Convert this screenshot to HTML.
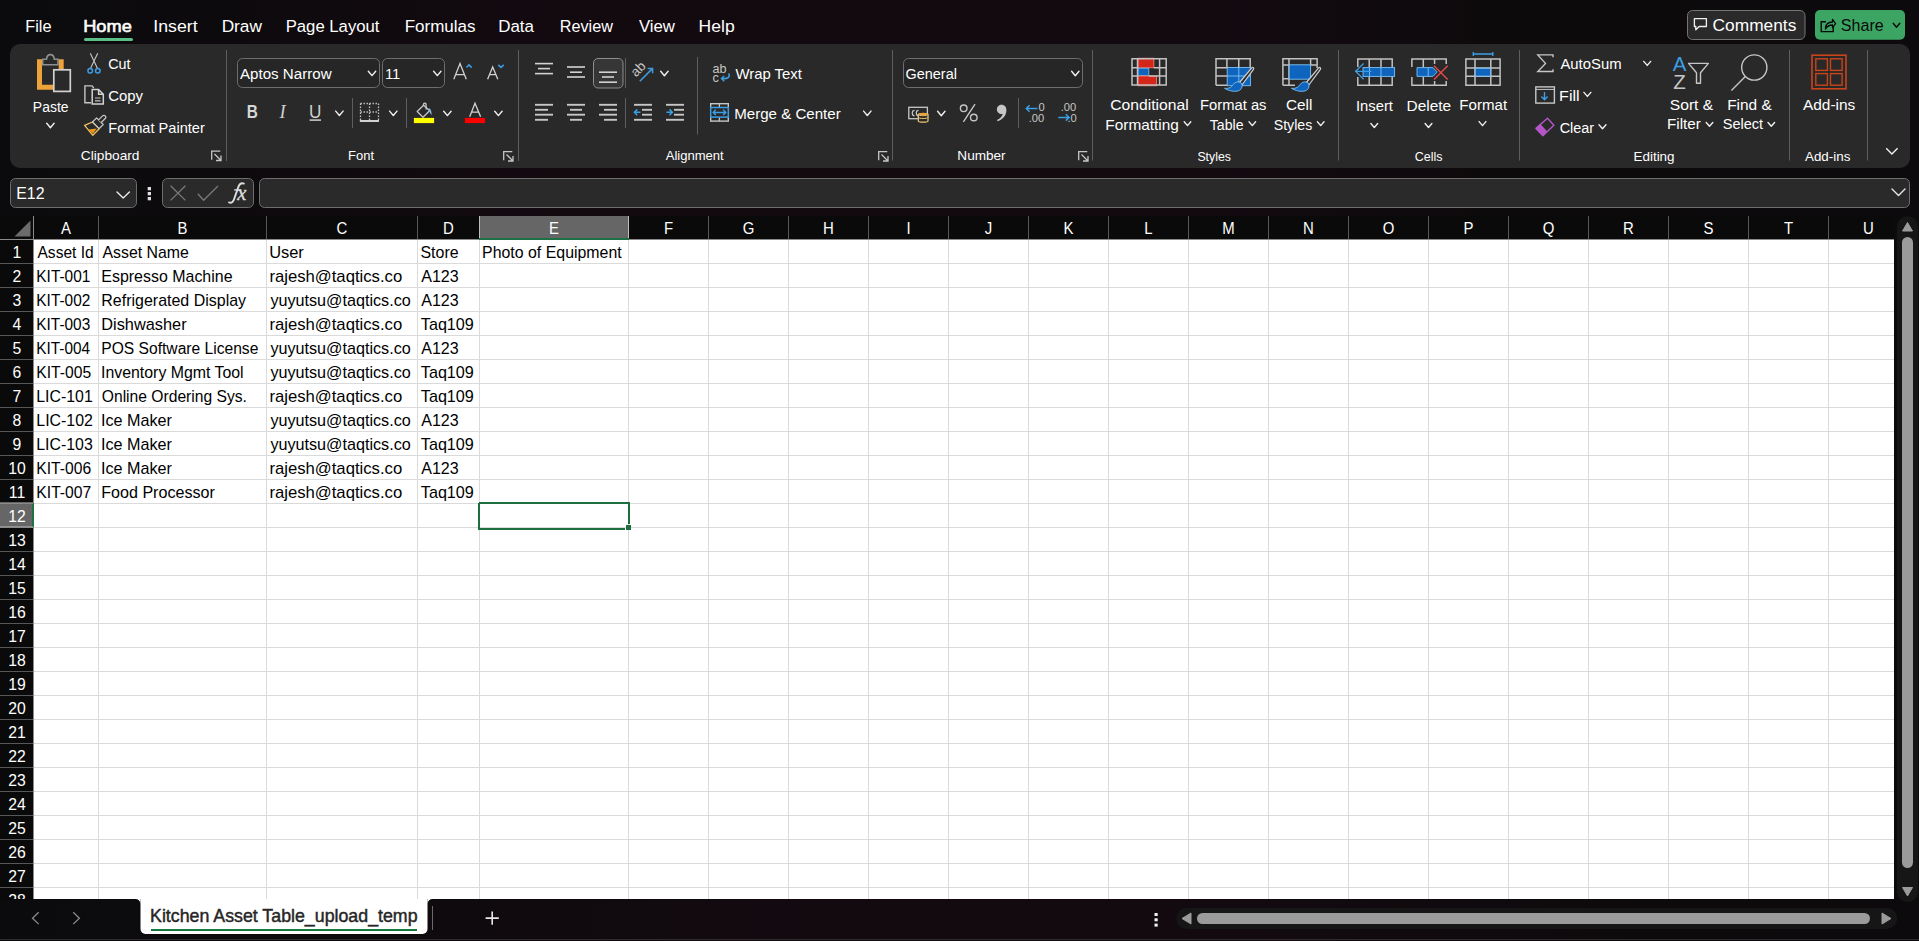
<!DOCTYPE html>
<html><head><meta charset="utf-8"><title>Excel</title>
<style>html,body{margin:0;padding:0;background:#0c0a0c;overflow:hidden;width:1919px;height:941px}svg{display:block}</style></head>
<body><svg width="1919" height="941" viewBox="0 0 1919 941" font-family="Liberation Sans, sans-serif">
<defs>
<linearGradient id="tbg" x1="0" y1="0" x2="1" y2="0">
<stop offset="0" stop-color="#0b0b0d"/><stop offset="0.12" stop-color="#0d0a0d"/><stop offset="0.3" stop-color="#130a10"/><stop offset="0.62" stop-color="#130a10"/><stop offset="0.78" stop-color="#0d0a0c"/><stop offset="1" stop-color="#0c0a0c"/>
</linearGradient>
<linearGradient id="bbg" x1="0" y1="0" x2="1" y2="0">
<stop offset="0" stop-color="#0b0b0d"/><stop offset="0.2" stop-color="#0e0a0d"/><stop offset="0.45" stop-color="#130a10"/><stop offset="0.65" stop-color="#120a0f"/><stop offset="0.85" stop-color="#0d0a0c"/><stop offset="1" stop-color="#0c0a0c"/>
</linearGradient>
</defs>
<rect x="0" y="0" width="1919" height="216" fill="url(#tbg)"/>
<rect x="10" y="44" width="1900" height="124" fill="#292929" rx="10"/>
<rect x="237.5" y="58.5" width="142" height="29" fill="#262626" rx="5" stroke="#6e6e6e" stroke-width="1"/>
<rect x="382.5" y="58.5" width="62" height="29" fill="#262626" rx="5" stroke="#6e6e6e" stroke-width="1"/>
<rect x="903.5" y="58.5" width="179" height="29" fill="#262626" rx="5" stroke="#6e6e6e" stroke-width="1"/>
<text transform="translate(25.21,32) scale(0.9391,1)" font-size="17.4" fill="#fff">File</text>
<text transform="translate(83.16,32) scale(1.0486,1)" font-size="17.4" fill="#fff" stroke="#fff" stroke-width="0.6">Home</text>
<text transform="translate(153.35,32) scale(1.0180,1)" font-size="17.4" fill="#fff">Insert</text>
<text transform="translate(221.63,32) scale(0.9936,1)" font-size="17.4" fill="#fff">Draw</text>
<text transform="translate(285.68,32) scale(0.9610,1)" font-size="17.4" fill="#fff">Page Layout</text>
<text transform="translate(404.65,32) scale(0.9787,1)" font-size="17.4" fill="#fff">Formulas</text>
<text transform="translate(498.16,32) scale(0.9753,1)" font-size="17.4" fill="#fff">Data</text>
<text transform="translate(559.72,32) scale(0.9327,1)" font-size="17.4" fill="#fff">Review</text>
<text transform="translate(638.88,32) scale(0.9632,1)" font-size="17.4" fill="#fff">View</text>
<text transform="translate(698.61,32) scale(1.0074,1)" font-size="17.4" fill="#fff">Help</text>
<rect x="84" y="38" width="49" height="3" fill="#5cbf87" rx="1.5"/>
<rect x="1687.5" y="10.5" width="117.5" height="29" fill="#2a2a2a" rx="5" stroke="#767676" stroke-width="1"/>
<text transform="translate(1712.60,30.5) scale(1.0701,1)" font-size="16.2" fill="#fff">Comments</text>
<rect x="1815" y="10" width="90" height="29.8" fill="#3ca564" rx="5"/>
<text transform="translate(1840.86,30.5) scale(0.9916,1)" font-size="16.2" fill="#0a0a0a">Share</text>
<text transform="translate(32.85,112) scale(0.9189,1)" font-size="15.2" fill="#fff">Paste</text>
<text transform="translate(108.30,68.7) scale(0.9399,1)" font-size="15.2" fill="#fff">Cut</text>
<text transform="translate(108.27,100.8) scale(0.9784,1)" font-size="15.2" fill="#fff">Copy</text>
<text transform="translate(108.20,132.5) scale(0.9624,1)" font-size="15.2" fill="#fff">Format Painter</text>
<text transform="translate(80.85,159.5) scale(1.0382,1)" font-size="13.2" fill="#fff">Clipboard</text>
<text transform="translate(348.01,160) scale(0.9852,1)" font-size="13.2" fill="#fff">Font</text>
<text transform="translate(665.75,159.5) scale(0.9893,1)" font-size="13.2" fill="#fff">Alignment</text>
<text transform="translate(957.37,160) scale(1.0295,1)" font-size="13.2" fill="#fff">Number</text>
<text transform="translate(1197.42,160.5) scale(0.9319,1)" font-size="13.2" fill="#fff">Styles</text>
<text transform="translate(1414.71,160.5) scale(0.9451,1)" font-size="13.2" fill="#fff">Cells</text>
<text transform="translate(1633.48,161.1) scale(1.0182,1)" font-size="13.2" fill="#fff">Editing</text>
<text transform="translate(1805.00,160.7) scale(1.0141,1)" font-size="13.2" fill="#fff">Add-ins</text>
<text transform="translate(240.00,78.6) scale(0.9954,1)" font-size="15.2" fill="#fff">Aptos Narrow</text>
<text transform="translate(384.90,78.6) scale(0.9786,1)" font-size="15.2" fill="#fff">11</text>
<text transform="translate(735.40,78.9) scale(0.9801,1)" font-size="15.2" fill="#fff">Wrap Text</text>
<text transform="translate(734.16,118.7) scale(0.9946,1)" font-size="15.2" fill="#fff">Merge &amp; Center</text>
<text transform="translate(905.49,78.9) scale(0.9508,1)" font-size="15.2" fill="#fff">General</text>
<text transform="translate(1110.23,109.8) scale(1.0316,1)" font-size="15.2" fill="#fff">Conditional</text>
<text transform="translate(1105.33,129.7) scale(1.0128,1)" font-size="15.2" fill="#fff">Formatting</text>
<text transform="translate(1200.09,109.8) scale(0.9711,1)" font-size="15.2" fill="#fff">Format as</text>
<text transform="translate(1209.77,129.7) scale(0.9296,1)" font-size="15.2" fill="#fff">Table</text>
<text transform="translate(1286.04,109.8) scale(1.0082,1)" font-size="15.2" fill="#fff">Cell</text>
<text transform="translate(1273.72,129.7) scale(0.9317,1)" font-size="15.2" fill="#fff">Styles</text>
<text transform="translate(1355.96,111.4) scale(0.9726,1)" font-size="15.2" fill="#fff">Insert</text>
<text transform="translate(1406.53,111.4) scale(1.0167,1)" font-size="15.2" fill="#fff">Delete</text>
<text transform="translate(1459.26,109.8) scale(0.9947,1)" font-size="15.2" fill="#fff">Format</text>
<text transform="translate(1560.40,69) scale(0.9789,1)" font-size="15.2" fill="#fff">AutoSum</text>
<text transform="translate(1559.08,100.5) scale(1.0569,1)" font-size="15.2" fill="#fff">Fill</text>
<text transform="translate(1559.69,132.6) scale(0.9498,1)" font-size="15.2" fill="#fff">Clear</text>
<text transform="translate(1669.76,110) scale(1.0296,1)" font-size="15.2" fill="#fff">Sort &amp;</text>
<text transform="translate(1667.05,129.3) scale(1.0008,1)" font-size="15.2" fill="#fff">Filter</text>
<text transform="translate(1727.13,110) scale(1.0165,1)" font-size="15.2" fill="#fff">Find &amp;</text>
<text transform="translate(1722.70,129.3) scale(0.9566,1)" font-size="15.2" fill="#fff">Select</text>
<text transform="translate(1803.00,110) scale(1.0157,1)" font-size="15.2" fill="#fff">Add-ins</text>
<line x1="226.5" y1="50" x2="226.5" y2="161" stroke="#5e5e5e" stroke-width="1"/>
<line x1="518.5" y1="50" x2="518.5" y2="161" stroke="#5e5e5e" stroke-width="1"/>
<line x1="697.5" y1="57" x2="697.5" y2="134.5" stroke="#5e5e5e" stroke-width="1"/>
<line x1="892.5" y1="50" x2="892.5" y2="160.5" stroke="#5e5e5e" stroke-width="1"/>
<line x1="1092.5" y1="50" x2="1092.5" y2="160.5" stroke="#5e5e5e" stroke-width="1"/>
<line x1="1338.5" y1="50" x2="1338.5" y2="160.5" stroke="#5e5e5e" stroke-width="1"/>
<line x1="1519.5" y1="50" x2="1519.5" y2="160.5" stroke="#5e5e5e" stroke-width="1"/>
<line x1="1789.5" y1="50" x2="1789.5" y2="160.5" stroke="#5e5e5e" stroke-width="1"/>
<line x1="1867.5" y1="50" x2="1867.5" y2="160.5" stroke="#5e5e5e" stroke-width="1"/>
<line x1="352.5" y1="98" x2="352.5" y2="128" stroke="#5e5e5e" stroke-width="1"/>
<line x1="406.5" y1="98" x2="406.5" y2="128" stroke="#5e5e5e" stroke-width="1"/>
<line x1="625.5" y1="58" x2="625.5" y2="88" stroke="#5e5e5e" stroke-width="1"/>
<line x1="625.5" y1="98" x2="625.5" y2="128" stroke="#5e5e5e" stroke-width="1"/>
<line x1="1018.5" y1="98" x2="1018.5" y2="128" stroke="#5e5e5e" stroke-width="1"/>
<rect x="10.5" y="178.5" width="126" height="29" fill="#2a2a2a" rx="5" stroke="#6e6e6e" stroke-width="1"/>
<rect x="162.5" y="178.5" width="91" height="29" fill="#2a2a2a" rx="5" stroke="#6e6e6e" stroke-width="1"/>
<rect x="259.5" y="178.5" width="1650" height="29" fill="#2a2a2a" rx="5" stroke="#6e6e6e" stroke-width="1"/>
<text transform="translate(16.20,198.6) scale(0.9459,1)" font-size="16.8" fill="#fff">E12</text>
<path d="M39.5 59.3V87.3H61.2V59.3" stroke="#eda23a" stroke-width="5" fill="none"/>
<path d="M42.7 64.7V59.2H46.5C46.8 56.2 48.5 54.6 50.4 54.6C52.3 54.6 54 56.2 54.3 59.2H58V64.7Z" stroke="#8f8f8f" stroke-width="1.6" fill="#292929"/>
<rect x="53.8" y="69.8" width="16.5" height="21.6" stroke="#d2d2d2" stroke-width="1.7" fill="#292929"/>
<path d="M46.70 123.30L50.40 127.70L54.10 123.30" stroke="#f0f0f0" stroke-width="1.4" fill="none" stroke-linejoin="round" stroke-linecap="round"/>
<path d="M90.3 53.3L97.4 68.3M97.7 53.3L90.6 68.3" stroke="#c6c6c6" stroke-width="1.1" fill="none"/>
<circle cx="90.2" cy="70.8" r="2.3" stroke="#3c9ee3" stroke-width="1.5" fill="none"/><circle cx="97.8" cy="70.8" r="2.3" stroke="#3c9ee3" stroke-width="1.5" fill="none"/>
<path d="M91 102.7H84.9V85.9H92L93.8 88" stroke="#c6c6c6" stroke-width="1.4" fill="none"/>
<path d="M92.2 89.5H98.6L103.3 94.2V104H92.2Z M98.6 89.5V94.2H103.3" stroke="#d2d2d2" stroke-width="1.5" fill="none" stroke-linejoin="miter"/>
<path d="M95 98H100.5M95 100.9H100.5" stroke="#c6c6c6" stroke-width="1.1"/>
<path d="M84.6 125.3L92.5 122L99.2 128.7L92.8 135.3Z" fill="#292929" stroke="#f3c463" stroke-width="1.3" stroke-linejoin="round"/>
<path d="M88.2 129.6L96.8 128.6L92.9 133.7Z" fill="#e8961c"/>
<path d="M92.5 122L96.6 117.9L103.2 124.5L99.2 128.6Z" fill="#292929" stroke="#c6c6c6" stroke-width="1.3" stroke-linejoin="round"/>
<path d="M98.6 119.9L102.6 115.9C103.4 115.1 104.4 115.1 105.2 115.9C106 116.7 106 117.7 105.2 118.5L101.2 122.5" fill="#292929" stroke="#c6c6c6" stroke-width="1.3" stroke-linejoin="round"/>
<path d="M211.7 159.8V151.2H220.3" stroke="#c6c6c6" stroke-width="1.3" fill="none"/><path d="M214.5 154.0L221 160.5M216 160.5H221V155.5" stroke="#c6c6c6" stroke-width="1.3" fill="none"/>
<path d="M368.30 71.20L372.00 75.60L375.70 71.20" stroke="#f0f0f0" stroke-width="1.4" fill="none" stroke-linejoin="round" stroke-linecap="round"/>
<path d="M433.60 71.20L437.30 75.60L441.00 71.20" stroke="#f0f0f0" stroke-width="1.4" fill="none" stroke-linejoin="round" stroke-linecap="round"/>
<path d="M453.8 79.3L460 63.6L466.3 79.3M455.9 74.6H464.2" stroke="#d2d2d2" stroke-width="1.3" fill="none"/>
<path d="M466.4 67.6L469 64.9L471.7 67.6" stroke="#3c9ee3" stroke-width="1.5" fill="none"/>
<path d="M487.6 79.3L492.7 66.9L497.8 79.3M489.4 74.7H496" stroke="#d2d2d2" stroke-width="1.3" fill="none"/>
<path d="M498.2 64.9L501 67.4L503.7 64.9" stroke="#3c9ee3" stroke-width="1.5" fill="none"/>
<text transform="translate(246.68,117.9) scale(0.8174,1)" font-size="18.8" fill="#d6d6d6" font-weight="700">B</text>
<text x="279.5" y="117.9" font-family="Liberation Serif" font-style="italic" font-size="18.5" fill="#d0d0d0">I</text>
<text transform="translate(309.10,118) scale(0.9446,1)" font-size="18.2" fill="#d0d0d0">U</text>
<rect x="309.6" y="119.3" width="11.4" height="1.6" fill="#c6c6c6"/>
<path d="M335.70 111.10L339.40 115.50L343.10 111.10" stroke="#f0f0f0" stroke-width="1.4" fill="none" stroke-linejoin="round" stroke-linecap="round"/>
<path d="M360.5 103.5H378.5M360.5 112H378.5M360.5 103.5V120.5M369.5 103.5V120.5M378.5 103.5V120.5" stroke="#c6c6c6" stroke-width="1.3" stroke-dasharray="1.4 1.6" fill="none"/>
<rect x="359.8" y="120" width="19.2" height="2" fill="#d2d2d2"/>
<path d="M389.60 111.10L393.30 115.50L397.00 111.10" stroke="#f0f0f0" stroke-width="1.4" fill="none" stroke-linejoin="round" stroke-linecap="round"/>
<path d="M417.2 111.5L423.6 105.2L429.6 110.7L423 117.2Z" stroke="#c6c6c6" stroke-width="1.3" fill="none" stroke-linejoin="round"/>
<path d="M423.4 105.4V104.5C423.4 102.8 426.1 102.8 426.1 104.5V109.5" stroke="#c6c6c6" stroke-width="1.3" fill="none"/>
<path d="M428.6 108C430.5 108.5 431.6 110.2 431.6 115.3C430 113.5 429 111 428.6 108Z" fill="#7db9e9"/>
<rect x="413.9" y="117.9" width="20.2" height="5.2" fill="#ffff00"/>
<path d="M443.70 111.20L447.40 115.60L451.10 111.20" stroke="#f0f0f0" stroke-width="1.4" fill="none" stroke-linejoin="round" stroke-linecap="round"/>
<path d="M469.7 116.8L475 103.2L480.6 116.8M471.5 112.2H478.8" stroke="#d2d2d2" stroke-width="1.3" fill="none"/>
<rect x="464.9" y="117.9" width="20.2" height="5.2" fill="#ff0000"/>
<path d="M494.70 111.20L498.40 115.60L502.10 111.20" stroke="#f0f0f0" stroke-width="1.4" fill="none" stroke-linejoin="round" stroke-linecap="round"/>
<path d="M503.7 160.3V151.7H512.3" stroke="#c6c6c6" stroke-width="1.3" fill="none"/><path d="M506.5 154.5L513 161M508 161H513V156" stroke="#c6c6c6" stroke-width="1.3" fill="none"/>
<rect x="593.5" y="58.5" width="29.5" height="29.5" rx="4.5" fill="#363636" stroke="#8e8e8e" stroke-width="1"/>
<path d="M535 63.6H553" stroke="#d2d2d2" stroke-width="1.6"/>
<path d="M538 68.6H550" stroke="#d2d2d2" stroke-width="1.6"/>
<path d="M535 73.6H553" stroke="#d2d2d2" stroke-width="1.6"/>
<path d="M567 67H585" stroke="#d2d2d2" stroke-width="1.6"/>
<path d="M570 72.2H582" stroke="#d2d2d2" stroke-width="1.6"/>
<path d="M567 77H585" stroke="#d2d2d2" stroke-width="1.6"/>
<path d="M599 72.2H617" stroke="#d2d2d2" stroke-width="1.6"/>
<path d="M602 77H614" stroke="#d2d2d2" stroke-width="1.6"/>
<path d="M599 82.2H617" stroke="#d2d2d2" stroke-width="1.6"/>
<path d="M535 104.8H553" stroke="#c6c6c6" stroke-width="1.9"/>
<path d="M567 104.8H585" stroke="#c6c6c6" stroke-width="1.9"/>
<path d="M599 104.8H617" stroke="#c6c6c6" stroke-width="1.9"/>
<path d="M535 109.8H548" stroke="#c6c6c6" stroke-width="1.9"/>
<path d="M570 109.8H582" stroke="#c6c6c6" stroke-width="1.9"/>
<path d="M604 109.8H617" stroke="#c6c6c6" stroke-width="1.9"/>
<path d="M535 114.7H553" stroke="#c6c6c6" stroke-width="1.9"/>
<path d="M567 114.7H585" stroke="#c6c6c6" stroke-width="1.9"/>
<path d="M599 114.7H617" stroke="#c6c6c6" stroke-width="1.9"/>
<path d="M535 119.8H548" stroke="#c6c6c6" stroke-width="1.9"/>
<path d="M570 119.8H582" stroke="#c6c6c6" stroke-width="1.9"/>
<path d="M604 119.8H617" stroke="#c6c6c6" stroke-width="1.9"/>
<path d="M634 104.8H652" stroke="#c6c6c6" stroke-width="1.9"/>
<path d="M642 109.8H652" stroke="#c6c6c6" stroke-width="1.9"/>
<path d="M642 114.7H652" stroke="#c6c6c6" stroke-width="1.9"/>
<path d="M634 119.8H652" stroke="#c6c6c6" stroke-width="1.9"/>
<path d="M640.5 112.3H634.6M637.3 109.4L634.4 112.3L637.3 115.2" stroke="#3c9ee3" stroke-width="1.5" fill="none"/>
<path d="M666 104.8H684" stroke="#c6c6c6" stroke-width="1.9"/>
<path d="M674 109.8H684" stroke="#c6c6c6" stroke-width="1.9"/>
<path d="M674 114.7H684" stroke="#c6c6c6" stroke-width="1.9"/>
<path d="M666 119.8H684" stroke="#c6c6c6" stroke-width="1.9"/>
<path d="M666.4 112.3H672.4M669.5 109.4L672.4 112.3L669.5 115.2" stroke="#3c9ee3" stroke-width="1.5" fill="none"/>
<text transform="translate(636,77.6) rotate(-45)" font-size="13.5" fill="#c6c6c6">ab</text>
<path d="M639.8 81.2L652.6 68.4M647.6 68.4H652.6V73.3" stroke="#3c9ee3" stroke-width="1.5" fill="none"/>
<path d="M660.70 71.30L664.40 75.70L668.10 71.30" stroke="#f0f0f0" stroke-width="1.4" fill="none" stroke-linejoin="round" stroke-linecap="round"/>
<text x="712.4" y="72.6" font-size="12.6" fill="#c6c6c6">ab</text>
<text x="712.4" y="81.8" font-size="12.6" fill="#c6c6c6">c</text>
<path d="M728.6 73.5C730.5 76.5 728.5 79 722 78.6M724.3 76L721.5 78.6L724.3 81.3" stroke="#3c9ee3" stroke-width="1.5" fill="none"/>
<rect x="710.7" y="103.7" width="17.6" height="17.4" stroke="#c6c6c6" stroke-width="1.4" fill="none"/>
<path d="M719.4 103.7V107M719.4 117.5V121" stroke="#c6c6c6" stroke-width="1.3"/>
<rect x="710.7" y="107.5" width="17.6" height="9.6" stroke="#3c9ee3" stroke-width="1.5" fill="#292929"/>
<path d="M713.3 112.4H725.7M715.8 109.8L713.2 112.4L715.8 115M723.2 109.8L725.8 112.4L723.2 115" stroke="#3c9ee3" stroke-width="1.5" fill="none"/>
<path d="M863.60 111.10L867.30 115.50L871.00 111.10" stroke="#f0f0f0" stroke-width="1.4" fill="none" stroke-linejoin="round" stroke-linecap="round"/>
<path d="M878.7 160.3V151.7H887.3" stroke="#c6c6c6" stroke-width="1.3" fill="none"/><path d="M881.5 154.5L888 161M883 161H888V156" stroke="#c6c6c6" stroke-width="1.3" fill="none"/>
<path d="M1071.60 71.30L1075.30 75.70L1079.00 71.30" stroke="#f0f0f0" stroke-width="1.4" fill="none" stroke-linejoin="round" stroke-linecap="round"/>
<rect x="908.8" y="107.3" width="18.6" height="11.4" stroke="#c6c6c6" stroke-width="1.3" fill="none"/>
<path d="M914.5 110.3C911.5 110.3 911.5 115.8 914.5 115.8M918.5 110.3C915.5 110.3 915.5 115.8 918.5 115.8" stroke="#c6c6c6" stroke-width="1.2" fill="none"/>
<path d="M918.3 114.5V121C918.3 122.6 928 122.6 928 121V114.5C928 112.8 918.3 112.8 918.3 114.5Z" fill="#292929" stroke="#f0c878" stroke-width="1.2"/>
<path d="M918.3 117.3C918.3 118.9 928 118.9 928 117.3M918.3 114.5C918.3 116.1 928 116.1 928 114.5" stroke="#f0c878" stroke-width="1" fill="none"/>
<ellipse cx="923.15" cy="114.2" rx="4" ry="1.1" fill="#f0a030"/>
<path d="M937.60 111.30L941.30 115.70L945.00 111.30" stroke="#f0f0f0" stroke-width="1.4" fill="none" stroke-linejoin="round" stroke-linecap="round"/>
<circle cx="963.7" cy="108.3" r="3.3" stroke="#c6c6c6" stroke-width="1.4" fill="none"/><circle cx="973.8" cy="117.5" r="3.3" stroke="#c6c6c6" stroke-width="1.4" fill="none"/><path d="M963.4 121.8L975 104.2" stroke="#c6c6c6" stroke-width="1.4"/>
<path d="M1001.6 104.8C1004.6 104.8 1006.4 107.2 1006.4 110.2C1006.4 115.3 1003 119.3 997.6 121.2L997 119.9C1000.4 118.2 1002.2 116 1002.7 113.9C1002.4 114 1002 114.1 1001.6 114.1C999 114.1 996.9 112.1 996.9 109.5C996.9 106.9 999 104.8 1001.6 104.8Z" fill="#c6c6c6"/>
<text x="1038.5" y="111.4" font-size="11.2" fill="#c6c6c6">0</text>
<text x="1028.7" y="122" font-size="11.2" fill="#c6c6c6">.00</text>
<path d="M1037.4 108.5H1026.4M1029.6 105.3L1026.3 108.5L1029.6 111.7" stroke="#3c9ee3" stroke-width="1.5" fill="none"/>
<text x="1060.7" y="111.4" font-size="11.2" fill="#c6c6c6">.00</text>
<text x="1067.4" y="122" font-size="11.2" fill="#c6c6c6">.0</text>
<path d="M1058.3 117.4H1069M1065.8 114.2L1069.1 117.4L1065.8 120.6" stroke="#3c9ee3" stroke-width="1.5" fill="none"/>
<path d="M1078.7 160.3V151.7H1087.3" stroke="#c6c6c6" stroke-width="1.3" fill="none"/><path d="M1081.5 154.5L1088 161M1083 161H1088V156" stroke="#c6c6c6" stroke-width="1.3" fill="none"/>
<rect x="1138" y="58.2" width="15.9" height="9.6" fill="#d4271a" stroke="#ff8080" stroke-width="0.8"/>
<rect x="1138" y="68.2" width="10.8" height="7.2" fill="#0f64bd" stroke="#7cc3f5" stroke-width="0.8"/>
<rect x="1138" y="76" width="18.5" height="9.8" fill="#d4271a" stroke="#ff8080" stroke-width="0.8"/>
<path d="M1132 58.8H1166.2V85H1132Z M1132 67.7H1138M1153.9 67.7H1166.2M1132 76.1H1138M1148.8 76.1H1166.2M1137.5 58.8V85M1159.6 58.8V85" stroke="#c2c2c2" stroke-width="1.5" fill="none"/>
<path d="M1184.20 121.80L1187.50 125.60L1190.80 121.80" stroke="#f0f0f0" stroke-width="1.4" fill="none" stroke-linejoin="round" stroke-linecap="round"/>
<rect x="1227.2" y="67.5" width="23.2" height="18.2" fill="#0f64bd" stroke="#7cc3f5" stroke-width="0.9"/>
<path d="M1227.2 76H1250.4M1238.8 67.5V85.7" stroke="#7cc3f5" stroke-width="0.9"/>
<path d="M1216 85.2V58.8H1250.2V67.4M1216 85.2H1227M1216 67.8H1227.2M1216 75.9H1227.2M1226.9 58.8V67.5M1238.75 58.8V67.5" stroke="#c2c2c2" stroke-width="1.5" fill="none"/>
<path d="M1239.5 82.5L1251.5 68.2C1253 66.5 1254.5 68 1253.3 69.6L1242.3 84.5Z" fill="#292929" stroke="#d0d0d0" stroke-width="1.2"/>
<path d="M1239 82C1242.5 82.6 1243 86.5 1240.8 89.3C1238.5 92 1231 92.3 1224.6 88.3C1229.8 88.8 1231.5 86.8 1233.2 84.5C1234.8 82.3 1236.8 81.7 1239 82Z" fill="#0f64bd" stroke="#7cc3f5" stroke-width="0.9"/>
<path d="M1249.00 121.80L1252.30 125.60L1255.60 121.80" stroke="#f0f0f0" stroke-width="1.4" fill="none" stroke-linejoin="round" stroke-linecap="round"/>
<path d="M1282.9 85.2V58.8H1317.1V68M1282.9 85.2H1295M1283 65H1289M1310.6 65H1317.1M1283 78.7H1289M1289 58.8V85.2M1310.6 58.8V65" stroke="#c2c2c2" stroke-width="1.5" fill="none"/>
<rect x="1289.2" y="64.8" width="21.4" height="14.4" fill="#0f64bd" stroke="#7cc3f5" stroke-width="0.9"/>
<path d="M1306.4 82.5L1318.4 68.2C1319.9 66.5 1321.4 68 1320.2 69.6L1309.2 84.5Z" fill="#292929" stroke="#d0d0d0" stroke-width="1.2"/>
<path d="M1305.9 82C1309.4 82.6 1309.9 86.5 1307.7 89.3C1305.4 92 1297.9 92.3 1291.5 88.3C1296.7 88.8 1298.4 86.8 1300.1 84.5C1301.7 82.3 1303.7 81.7 1305.9 82Z" fill="#0f64bd" stroke="#7cc3f5" stroke-width="0.9"/>
<path d="M1317.40 121.80L1320.70 125.60L1324.00 121.80" stroke="#f0f0f0" stroke-width="1.4" fill="none" stroke-linejoin="round" stroke-linecap="round"/>
<path d="M1357.8 67V58.9H1392.2V67M1357.8 77V85.2H1392.2V77M1369.2 58.9V67M1381 58.9V67M1369.2 77V85.2M1381 77V85.2" stroke="#c2c2c2" stroke-width="1.5" fill="none"/>
<rect x="1363" y="67.6" width="31.6" height="8.8" fill="#0f64bd" stroke="#7cc3f5" stroke-width="0.9"/>
<path d="M1369.5 67.6V76.4M1381 67.6V76.4" stroke="#7cc3f5" stroke-width="0.9"/>
<path d="M1371.5 71.3H1356M1363.6 63.5L1355.6 71.3L1363.6 79.2" stroke="#3c9ee3" stroke-width="1.3" fill="none"/>
<path d="M1370.90 123.50L1374.30 127.50L1377.70 123.50" stroke="#f0f0f0" stroke-width="1.4" fill="none" stroke-linejoin="round" stroke-linecap="round"/>
<path d="M1411.9 67V58.9H1446.2V64M1411.9 77V85.2H1446.2V81M1423.3 58.9V67M1434.6 58.9V64M1423.3 77V85.2M1434.6 81V85.2" stroke="#c2c2c2" stroke-width="1.5" fill="none"/>
<path d="M1417 67.6H1433L1437.2 72L1433 76.4H1417Z" fill="#0f64bd" stroke="#7cc3f5" stroke-width="0.9"/>
<path d="M1428.2 67.6V76.4" stroke="#7cc3f5" stroke-width="0.9"/>
<path d="M1434 65.7L1447.7 79.5M1447.7 65.7L1434 79.5" stroke="#e8494a" stroke-width="1.4"/>
<path d="M1425.10 123.50L1428.50 127.50L1431.90 123.50" stroke="#f0f0f0" stroke-width="1.4" fill="none" stroke-linejoin="round" stroke-linecap="round"/>
<path d="M1473.3 54H1492.8M1473.3 52V56M1492.8 52V56" stroke="#3c9ee3" stroke-width="1.4"/>
<path d="M1465.9 58.9H1500.1V85.2H1465.9Z M1465.9 68H1500.1M1465.9 76.3H1500.1M1475 58.9V85.2M1490.8 58.9V85.2" stroke="#c2c2c2" stroke-width="1.5" fill="none"/>
<rect x="1475.3" y="68.3" width="15.2" height="7.8" fill="#0f64bd" stroke="#7cc3f5" stroke-width="0.9"/>
<path d="M1479.10 121.60L1482.50 125.60L1485.90 121.60" stroke="#f0f0f0" stroke-width="1.4" fill="none" stroke-linejoin="round" stroke-linecap="round"/>
<path d="M1553 57.2V54.9H1537.8L1545.5 63.4L1537.8 71.5H1553V69.2" stroke="#c6c6c6" stroke-width="1.4" fill="none" stroke-linejoin="miter"/>
<path d="M1643.70 61.40L1647.20 65.40L1650.70 61.40" stroke="#f0f0f0" stroke-width="1.4" fill="none" stroke-linejoin="round" stroke-linecap="round"/>
<rect x="1535.8" y="86.9" width="18.6" height="16.2" stroke="#c6c6c6" stroke-width="1.4" fill="none"/>
<path d="M1535.8 89.4H1554.4" stroke="#c6c6c6" stroke-width="1"/>
<path d="M1544.5 92V99.6M1541.4 96.6L1544.5 99.8L1547.6 96.6" stroke="#3c9ee3" stroke-width="1.4" fill="none"/>
<path d="M1583.90 92.40L1587.40 96.40L1590.90 92.40" stroke="#f0f0f0" stroke-width="1.4" fill="none" stroke-linejoin="round" stroke-linecap="round"/>
<path d="M1535.9 128.4L1547.5 118.2L1553.9 125.3L1542.9 135.8Z" stroke="#b455c8" stroke-width="1.4" fill="none" stroke-linejoin="round"/>
<path d="M1535.9 128.4L1540.6 124.3L1547.3 131.6L1542.9 135.8Z" fill="#b455c8"/>
<path d="M1599.00 124.70L1602.50 128.70L1606.00 124.70" stroke="#f0f0f0" stroke-width="1.4" fill="none" stroke-linejoin="round" stroke-linecap="round"/>
<text x="1672.8" y="70.6" font-size="20.5" fill="#3c9ee3">A</text>
<text x="1673.2" y="88.6" font-size="20.5" fill="#c6c6c6">Z</text>
<path d="M1688.6 63.4H1708.4L1700.5 72.8V83.2H1696.5V72.8Z" stroke="#c6c6c6" stroke-width="1.4" fill="none" stroke-linejoin="round"/>
<path d="M1706.20 122.50L1709.50 126.30L1712.80 122.50" stroke="#f0f0f0" stroke-width="1.4" fill="none" stroke-linejoin="round" stroke-linecap="round"/>
<circle cx="1754.3" cy="67.5" r="12.6" stroke="#c6c6c6" stroke-width="1.4" fill="none"/>
<path d="M1745.3 76.5L1731.4 90.4" stroke="#c6c6c6" stroke-width="1.4"/>
<path d="M1768.00 122.50L1771.30 126.30L1774.60 122.50" stroke="#f0f0f0" stroke-width="1.4" fill="none" stroke-linejoin="round" stroke-linecap="round"/>
<rect x="1812" y="55.2" width="34" height="33.6" stroke="#c9441b" stroke-width="1.6" fill="none"/>
<rect x="1815.8" y="58.8" width="11.6" height="11.6" stroke="#c9441b" stroke-width="1.4" fill="none"/>
<rect x="1830.5" y="58.8" width="11.6" height="11.6" stroke="#c9441b" stroke-width="1.4" fill="none"/>
<rect x="1815.8" y="73.6" width="11.6" height="11.6" stroke="#c9441b" stroke-width="1.4" fill="none"/>
<rect x="1830.5" y="73.6" width="11.6" height="11.6" stroke="#c9441b" stroke-width="1.4" fill="none"/>
<path d="M1886.2 148.3L1891.9 154L1897.6 148.3" stroke="#f0f0f0" stroke-width="1.4" fill="none"/>
<path d="M1694.4 18.6H1706.4V26.5H1699.2L1695.8 29.8V26.5H1694.4Z" stroke="#f0f0f0" stroke-width="1.3" fill="none" stroke-linejoin="round"/>
<path d="M1826 21.8H1821.2V31.6H1833.2V27" stroke="#0a0a0a" stroke-width="1.4" fill="none"/>
<path d="M1825.5 29C1825.5 23.8 1828.5 22 1832.5 22V19.3L1835.6 23.6L1832.5 27.6V25C1829 25 1827 26.5 1825.5 29Z" stroke="#0a0a0a" stroke-width="1.3" fill="none" stroke-linejoin="round"/>
<path d="M1893.20 23.20L1896.50 27.20L1899.80 23.20" stroke="#0a0a0a" stroke-width="1.4" fill="none" stroke-linejoin="round" stroke-linecap="round"/>
<path d="M117.00 191.90L123.20 198.10L129.40 191.90" stroke="#e8e8e8" stroke-width="1.4" fill="none" stroke-linejoin="round" stroke-linecap="round"/>
<rect x="147.7" y="187" width="3.3" height="3.3" fill="#e0e0e0"/><rect x="147.7" y="192" width="3.3" height="3.3" fill="#e0e0e0"/><rect x="147.7" y="197" width="3.3" height="3.3" fill="#e0e0e0"/>
<path d="M170.6 185.8L185.4 200.4M185.4 185.8L170.6 200.4" stroke="#7a7a7a" stroke-width="1.3"/>
<path d="M197.8 193.8L203.6 200.2L218 186" stroke="#7a7a7a" stroke-width="1.3" fill="none"/>
<path d="M229 202.4C231.6 203.4 233.4 201.8 234.7 197.4L238.5 186.6C239.6 183.7 241.4 182.7 243.9 183.6" stroke="#dcdcdc" stroke-width="1.9" fill="none" stroke-linecap="round"/>
<path d="M234.2 189.9H241.4" stroke="#dcdcdc" stroke-width="1.4"/>
<text x="237.2" y="199.8" font-family="Liberation Serif" font-style="italic" font-size="20.5" fill="#dcdcdc" stroke="#dcdcdc" stroke-width="0.35">x</text>
<path d="M1892.00 189.10L1898.50 195.50L1905.00 189.10" stroke="#e8e8e8" stroke-width="1.4" fill="none" stroke-linejoin="round" stroke-linecap="round"/>
<rect x="0" y="216" width="1894" height="24" fill="#0a0a0a"/>
<rect x="1894" y="216" width="25" height="683" fill="#0b0b0b"/>
<rect x="34" y="240" width="1860" height="659" fill="#ffffff"/>
<rect x="0" y="240" width="33" height="659" fill="#0a0a0a"/>
<rect x="479" y="216" width="150" height="23" fill="#666666"/>
<rect x="0" y="503" width="33" height="24" fill="#666666"/>
<path d="M98.5 240V899 M266.5 240V899 M417.5 240V899 M479.5 240V899 M628.5 240V899 M708.5 240V899 M788.5 240V899 M868.5 240V899 M948.5 240V899 M1028.5 240V899 M1108.5 240V899 M1188.5 240V899 M1268.5 240V899 M1348.5 240V899 M1428.5 240V899 M1508.5 240V899 M1588.5 240V899 M1668.5 240V899 M1748.5 240V899 M1828.5 240V899 M34 263.5H1894 M34 287.5H1894 M34 311.5H1894 M34 335.5H1894 M34 359.5H1894 M34 383.5H1894 M34 407.5H1894 M34 431.5H1894 M34 455.5H1894 M34 479.5H1894 M34 503.5H1894 M34 527.5H1894 M34 551.5H1894 M34 575.5H1894 M34 599.5H1894 M34 623.5H1894 M34 647.5H1894 M34 671.5H1894 M34 695.5H1894 M34 719.5H1894 M34 743.5H1894 M34 767.5H1894 M34 791.5H1894 M34 815.5H1894 M34 839.5H1894 M34 863.5H1894 M34 887.5H1894" stroke="#dadada" stroke-width="1" fill="none"/>
<path d="M98.5 216V239 M266.5 216V239 M417.5 216V239 M479.5 216V239 M628.5 216V239 M708.5 216V239 M788.5 216V239 M868.5 216V239 M948.5 216V239 M1028.5 216V239 M1108.5 216V239 M1188.5 216V239 M1268.5 216V239 M1348.5 216V239 M1428.5 216V239 M1508.5 216V239 M1588.5 216V239 M1668.5 216V239 M1748.5 216V239 M1828.5 216V239 M0 263.5H33 M0 287.5H33 M0 311.5H33 M0 335.5H33 M0 359.5H33 M0 383.5H33 M0 407.5H33 M0 431.5H33 M0 455.5H33 M0 479.5H33 M0 503.5H33 M0 527.5H33 M0 551.5H33 M0 575.5H33 M0 599.5H33 M0 623.5H33 M0 647.5H33 M0 671.5H33 M0 695.5H33 M0 719.5H33 M0 743.5H33 M0 767.5H33 M0 791.5H33 M0 815.5H33 M0 839.5H33 M0 863.5H33 M0 887.5H33" stroke="#575757" stroke-width="1" fill="none"/>
<line x1="0" y1="239.5" x2="1894" y2="239.5" stroke="#8c8c8c" stroke-width="1"/>
<line x1="33.5" y1="216" x2="33.5" y2="899" stroke="#8c8c8c" stroke-width="1"/>
<line x1="33" y1="503" x2="33" y2="527" stroke="#1e7145" stroke-width="2"/>
<rect x="479" y="238" width="150" height="2" fill="#1e7145"/>
<line x1="479.5" y1="216" x2="479.5" y2="238" stroke="#bdbdbd" stroke-width="1"/>
<line x1="628.5" y1="216" x2="628.5" y2="238" stroke="#bdbdbd" stroke-width="1"/>
<rect x="0" y="502.5" width="33" height="1" fill="#bdbdbd"/>
<rect x="0" y="526.5" width="33" height="1" fill="#bdbdbd"/>
<path d="M14.5 236.5L30.5 220.5V236.5Z" fill="#6b6b6b"/>
<text transform="translate(66.0,233.8) scale(0.9,1)" font-size="16.6" fill="#fff" text-anchor="middle">A</text>
<text transform="translate(182.5,233.8) scale(0.9,1)" font-size="16.6" fill="#fff" text-anchor="middle">B</text>
<text transform="translate(342.0,233.8) scale(0.9,1)" font-size="16.6" fill="#fff" text-anchor="middle">C</text>
<text transform="translate(448.5,233.8) scale(0.9,1)" font-size="16.6" fill="#fff" text-anchor="middle">D</text>
<text transform="translate(554.0,233.8) scale(0.9,1)" font-size="16.6" fill="#fff" text-anchor="middle">E</text>
<text transform="translate(668.5,233.8) scale(0.9,1)" font-size="16.6" fill="#fff" text-anchor="middle">F</text>
<text transform="translate(748.5,233.8) scale(0.9,1)" font-size="16.6" fill="#fff" text-anchor="middle">G</text>
<text transform="translate(828.5,233.8) scale(0.9,1)" font-size="16.6" fill="#fff" text-anchor="middle">H</text>
<text transform="translate(908.5,233.8) scale(0.9,1)" font-size="16.6" fill="#fff" text-anchor="middle">I</text>
<text transform="translate(988.5,233.8) scale(0.9,1)" font-size="16.6" fill="#fff" text-anchor="middle">J</text>
<text transform="translate(1068.5,233.8) scale(0.9,1)" font-size="16.6" fill="#fff" text-anchor="middle">K</text>
<text transform="translate(1148.5,233.8) scale(0.9,1)" font-size="16.6" fill="#fff" text-anchor="middle">L</text>
<text transform="translate(1228.5,233.8) scale(0.9,1)" font-size="16.6" fill="#fff" text-anchor="middle">M</text>
<text transform="translate(1308.5,233.8) scale(0.9,1)" font-size="16.6" fill="#fff" text-anchor="middle">N</text>
<text transform="translate(1388.5,233.8) scale(0.9,1)" font-size="16.6" fill="#fff" text-anchor="middle">O</text>
<text transform="translate(1468.5,233.8) scale(0.9,1)" font-size="16.6" fill="#fff" text-anchor="middle">P</text>
<text transform="translate(1548.5,233.8) scale(0.9,1)" font-size="16.6" fill="#fff" text-anchor="middle">Q</text>
<text transform="translate(1628.5,233.8) scale(0.9,1)" font-size="16.6" fill="#fff" text-anchor="middle">R</text>
<text transform="translate(1708.5,233.8) scale(0.9,1)" font-size="16.6" fill="#fff" text-anchor="middle">S</text>
<text transform="translate(1788.5,233.8) scale(0.9,1)" font-size="16.6" fill="#fff" text-anchor="middle">T</text>
<text transform="translate(1868.5,233.8) scale(0.9,1)" font-size="16.6" fill="#fff" text-anchor="middle">U</text>
<text transform="translate(17,257.8) scale(0.95,1)" font-size="16.6" fill="#fff" text-anchor="middle">1</text>
<text transform="translate(17,281.8) scale(0.95,1)" font-size="16.6" fill="#fff" text-anchor="middle">2</text>
<text transform="translate(17,305.8) scale(0.95,1)" font-size="16.6" fill="#fff" text-anchor="middle">3</text>
<text transform="translate(17,329.8) scale(0.95,1)" font-size="16.6" fill="#fff" text-anchor="middle">4</text>
<text transform="translate(17,353.8) scale(0.95,1)" font-size="16.6" fill="#fff" text-anchor="middle">5</text>
<text transform="translate(17,377.8) scale(0.95,1)" font-size="16.6" fill="#fff" text-anchor="middle">6</text>
<text transform="translate(17,401.8) scale(0.95,1)" font-size="16.6" fill="#fff" text-anchor="middle">7</text>
<text transform="translate(17,425.8) scale(0.95,1)" font-size="16.6" fill="#fff" text-anchor="middle">8</text>
<text transform="translate(17,449.8) scale(0.95,1)" font-size="16.6" fill="#fff" text-anchor="middle">9</text>
<text transform="translate(17,473.8) scale(0.95,1)" font-size="16.6" fill="#fff" text-anchor="middle">10</text>
<text transform="translate(17,497.8) scale(0.95,1)" font-size="16.6" fill="#fff" text-anchor="middle">11</text>
<text transform="translate(17,521.8) scale(0.95,1)" font-size="16.6" fill="#fff" text-anchor="middle">12</text>
<text transform="translate(17,545.8) scale(0.95,1)" font-size="16.6" fill="#fff" text-anchor="middle">13</text>
<text transform="translate(17,569.8) scale(0.95,1)" font-size="16.6" fill="#fff" text-anchor="middle">14</text>
<text transform="translate(17,593.8) scale(0.95,1)" font-size="16.6" fill="#fff" text-anchor="middle">15</text>
<text transform="translate(17,617.8) scale(0.95,1)" font-size="16.6" fill="#fff" text-anchor="middle">16</text>
<text transform="translate(17,641.8) scale(0.95,1)" font-size="16.6" fill="#fff" text-anchor="middle">17</text>
<text transform="translate(17,665.8) scale(0.95,1)" font-size="16.6" fill="#fff" text-anchor="middle">18</text>
<text transform="translate(17,689.8) scale(0.95,1)" font-size="16.6" fill="#fff" text-anchor="middle">19</text>
<text transform="translate(17,713.8) scale(0.95,1)" font-size="16.6" fill="#fff" text-anchor="middle">20</text>
<text transform="translate(17,737.8) scale(0.95,1)" font-size="16.6" fill="#fff" text-anchor="middle">21</text>
<text transform="translate(17,761.8) scale(0.95,1)" font-size="16.6" fill="#fff" text-anchor="middle">22</text>
<text transform="translate(17,785.8) scale(0.95,1)" font-size="16.6" fill="#fff" text-anchor="middle">23</text>
<text transform="translate(17,809.8) scale(0.95,1)" font-size="16.6" fill="#fff" text-anchor="middle">24</text>
<text transform="translate(17,833.8) scale(0.95,1)" font-size="16.6" fill="#fff" text-anchor="middle">25</text>
<text transform="translate(17,857.8) scale(0.95,1)" font-size="16.6" fill="#fff" text-anchor="middle">26</text>
<text transform="translate(17,881.8) scale(0.95,1)" font-size="16.6" fill="#fff" text-anchor="middle">27</text>
<text transform="translate(17,905.8) scale(0.95,1)" font-size="16.6" fill="#fff" text-anchor="middle">28</text>
<text transform="translate(37.50,257.8) scale(0.9476,1)" font-size="16.4" fill="#000">Asset Id</text>
<text transform="translate(102.50,257.8) scale(0.9670,1)" font-size="16.4" fill="#000">Asset Name</text>
<text transform="translate(269.15,257.8) scale(1.0023,1)" font-size="16.4" fill="#000">User</text>
<text transform="translate(420.47,257.8) scale(0.9722,1)" font-size="16.4" fill="#000">Store</text>
<text transform="translate(482.09,257.8) scale(0.9695,1)" font-size="16.4" fill="#000">Photo of Equipment</text>
<text transform="translate(36.32,281.8) scale(0.9409,1)" font-size="16.4" fill="#000">KIT-001</text>
<text transform="translate(101.28,281.8) scale(0.9737,1)" font-size="16.4" fill="#000">Espresso Machine</text>
<text transform="translate(269.38,281.8) scale(1.0180,1)" font-size="16.4" fill="#000">rajesh@taqtics.co</text>
<text transform="translate(421.20,281.8) scale(0.9781,1)" font-size="16.4" fill="#000">A123</text>
<text transform="translate(36.32,305.8) scale(0.9409,1)" font-size="16.4" fill="#000">KIT-002</text>
<text transform="translate(101.28,305.8) scale(0.9752,1)" font-size="16.4" fill="#000">Refrigerated Display</text>
<text transform="translate(270.40,305.8) scale(0.9862,1)" font-size="16.4" fill="#000">yuyutsu@taqtics.co</text>
<text transform="translate(421.20,305.8) scale(0.9781,1)" font-size="16.4" fill="#000">A123</text>
<text transform="translate(36.33,329.8) scale(0.9387,1)" font-size="16.4" fill="#000">KIT-003</text>
<text transform="translate(101.25,329.8) scale(0.9970,1)" font-size="16.4" fill="#000">Dishwasher</text>
<text transform="translate(269.38,329.8) scale(1.0180,1)" font-size="16.4" fill="#000">rajesh@taqtics.co</text>
<text transform="translate(420.83,329.8) scale(0.9858,1)" font-size="16.4" fill="#000">Taq109</text>
<text transform="translate(36.33,353.8) scale(0.9345,1)" font-size="16.4" fill="#000">KIT-004</text>
<text transform="translate(101.31,353.8) scale(0.9528,1)" font-size="16.4" fill="#000">POS Software License</text>
<text transform="translate(270.40,353.8) scale(0.9862,1)" font-size="16.4" fill="#000">yuyutsu@taqtics.co</text>
<text transform="translate(421.20,353.8) scale(0.9781,1)" font-size="16.4" fill="#000">A123</text>
<text transform="translate(36.31,377.8) scale(0.9550,1)" font-size="16.4" fill="#000">KIT-005</text>
<text transform="translate(101.05,377.8) scale(0.9686,1)" font-size="16.4" fill="#000">Inventory Mgmt Tool</text>
<text transform="translate(270.40,377.8) scale(0.9862,1)" font-size="16.4" fill="#000">yuyutsu@taqtics.co</text>
<text transform="translate(420.83,377.8) scale(0.9858,1)" font-size="16.4" fill="#000">Taq109</text>
<text transform="translate(36.29,401.8) scale(0.9685,1)" font-size="16.4" fill="#000">LIC-101</text>
<text transform="translate(101.78,401.8) scale(0.9540,1)" font-size="16.4" fill="#000">Online Ordering Sys.</text>
<text transform="translate(269.38,401.8) scale(1.0180,1)" font-size="16.4" fill="#000">rajesh@taqtics.co</text>
<text transform="translate(420.83,401.8) scale(0.9858,1)" font-size="16.4" fill="#000">Taq109</text>
<text transform="translate(36.29,425.8) scale(0.9707,1)" font-size="16.4" fill="#000">LIC-102</text>
<text transform="translate(101.02,425.8) scale(0.9851,1)" font-size="16.4" fill="#000">Ice Maker</text>
<text transform="translate(270.40,425.8) scale(0.9862,1)" font-size="16.4" fill="#000">yuyutsu@taqtics.co</text>
<text transform="translate(421.20,425.8) scale(0.9781,1)" font-size="16.4" fill="#000">A123</text>
<text transform="translate(36.29,449.8) scale(0.9685,1)" font-size="16.4" fill="#000">LIC-103</text>
<text transform="translate(101.02,449.8) scale(0.9851,1)" font-size="16.4" fill="#000">Ice Maker</text>
<text transform="translate(270.40,449.8) scale(0.9862,1)" font-size="16.4" fill="#000">yuyutsu@taqtics.co</text>
<text transform="translate(420.83,449.8) scale(0.9858,1)" font-size="16.4" fill="#000">Taq109</text>
<text transform="translate(36.31,473.8) scale(0.9550,1)" font-size="16.4" fill="#000">KIT-006</text>
<text transform="translate(101.02,473.8) scale(0.9851,1)" font-size="16.4" fill="#000">Ice Maker</text>
<text transform="translate(269.38,473.8) scale(1.0180,1)" font-size="16.4" fill="#000">rajesh@taqtics.co</text>
<text transform="translate(421.20,473.8) scale(0.9781,1)" font-size="16.4" fill="#000">A123</text>
<text transform="translate(36.30,497.8) scale(0.9571,1)" font-size="16.4" fill="#000">KIT-007</text>
<text transform="translate(101.27,497.8) scale(0.9812,1)" font-size="16.4" fill="#000">Food Processor</text>
<text transform="translate(269.38,497.8) scale(1.0180,1)" font-size="16.4" fill="#000">rajesh@taqtics.co</text>
<text transform="translate(420.83,497.8) scale(0.9858,1)" font-size="16.4" fill="#000">Taq109</text>
<path d="M479 503H629V524M625 529H479V503" stroke="#1e6e3f" stroke-width="2" fill="none"/>
<rect x="626" y="525" width="5" height="5" fill="#1e6e3f"/>
<rect x="0" y="899" width="1919" height="42" fill="url(#bbg)"/>
<path d="M140.5 899H427.5V929A5 5 0 0 1 422.5 934H145.5A5 5 0 0 1 140.5 929Z" fill="#fff"/>
<path d="M135.5 899A5 5 0 0 1 140.5 904V899Z" fill="#fff"/>
<path d="M432.5 899A5 5 0 0 0 427.5 904V899Z" fill="#fff"/>
<text transform="translate(150.03,922) scale(0.9775,1)" font-size="18.2" fill="#262626" stroke="#262626" stroke-width="0.45">Kitchen Asset Table_upload_temp</text>
<rect x="151" y="929" width="266" height="2" fill="#137a3f"/>
<line x1="432.5" y1="906" x2="432.5" y2="930" stroke="#6a6a6a" stroke-width="1"/>
<line x1="0" y1="939.5" x2="1919" y2="939.5" stroke="#2c2c2c" stroke-width="1"/>
<path d="M38.7 912.3L32.5 918.2L38.7 924.1M73.2 912.3L79.4 918.2L73.2 924.1" stroke="#8a8a8a" stroke-width="1.3" fill="none"/>
<path d="M492.2 911.5V924.7M485.6 918.1H498.8" stroke="#e8e8e8" stroke-width="1.6"/>
<rect x="1154.5" y="913" width="3.2" height="3" fill="#f0f0f0"/><rect x="1154.5" y="918.3" width="3.2" height="3" fill="#f0f0f0"/><rect x="1154.5" y="923.6" width="3.2" height="3" fill="#f0f0f0"/>
<rect x="1176.3" y="908" width="721" height="21" fill="#161616" rx="10.5"/>
<path d="M1182 918.5L1191 913V924Z" fill="#9b9b9b" stroke="#9b9b9b" stroke-width="1" stroke-linejoin="round"/>
<rect x="1197" y="913" width="673" height="11" fill="#9b9b9b" rx="5.5"/>
<path d="M1891 918.5L1882 913V924Z" fill="#9b9b9b" stroke="#9b9b9b" stroke-width="1" stroke-linejoin="round"/>
<rect x="1897" y="216.2" width="21" height="686" fill="#161616" rx="10.5"/>
<path d="M1907.5 222.5L1902.5 231H1912.5Z" fill="#9b9b9b" stroke="#9b9b9b" stroke-width="1" stroke-linejoin="round"/>
<rect x="1902" y="237" width="11" height="631" fill="#9b9b9b" rx="5.5"/>
<path d="M1907.5 896L1902.5 887.5H1912.5Z" fill="#9b9b9b" stroke="#9b9b9b" stroke-width="1" stroke-linejoin="round"/>
</svg></body></html>
